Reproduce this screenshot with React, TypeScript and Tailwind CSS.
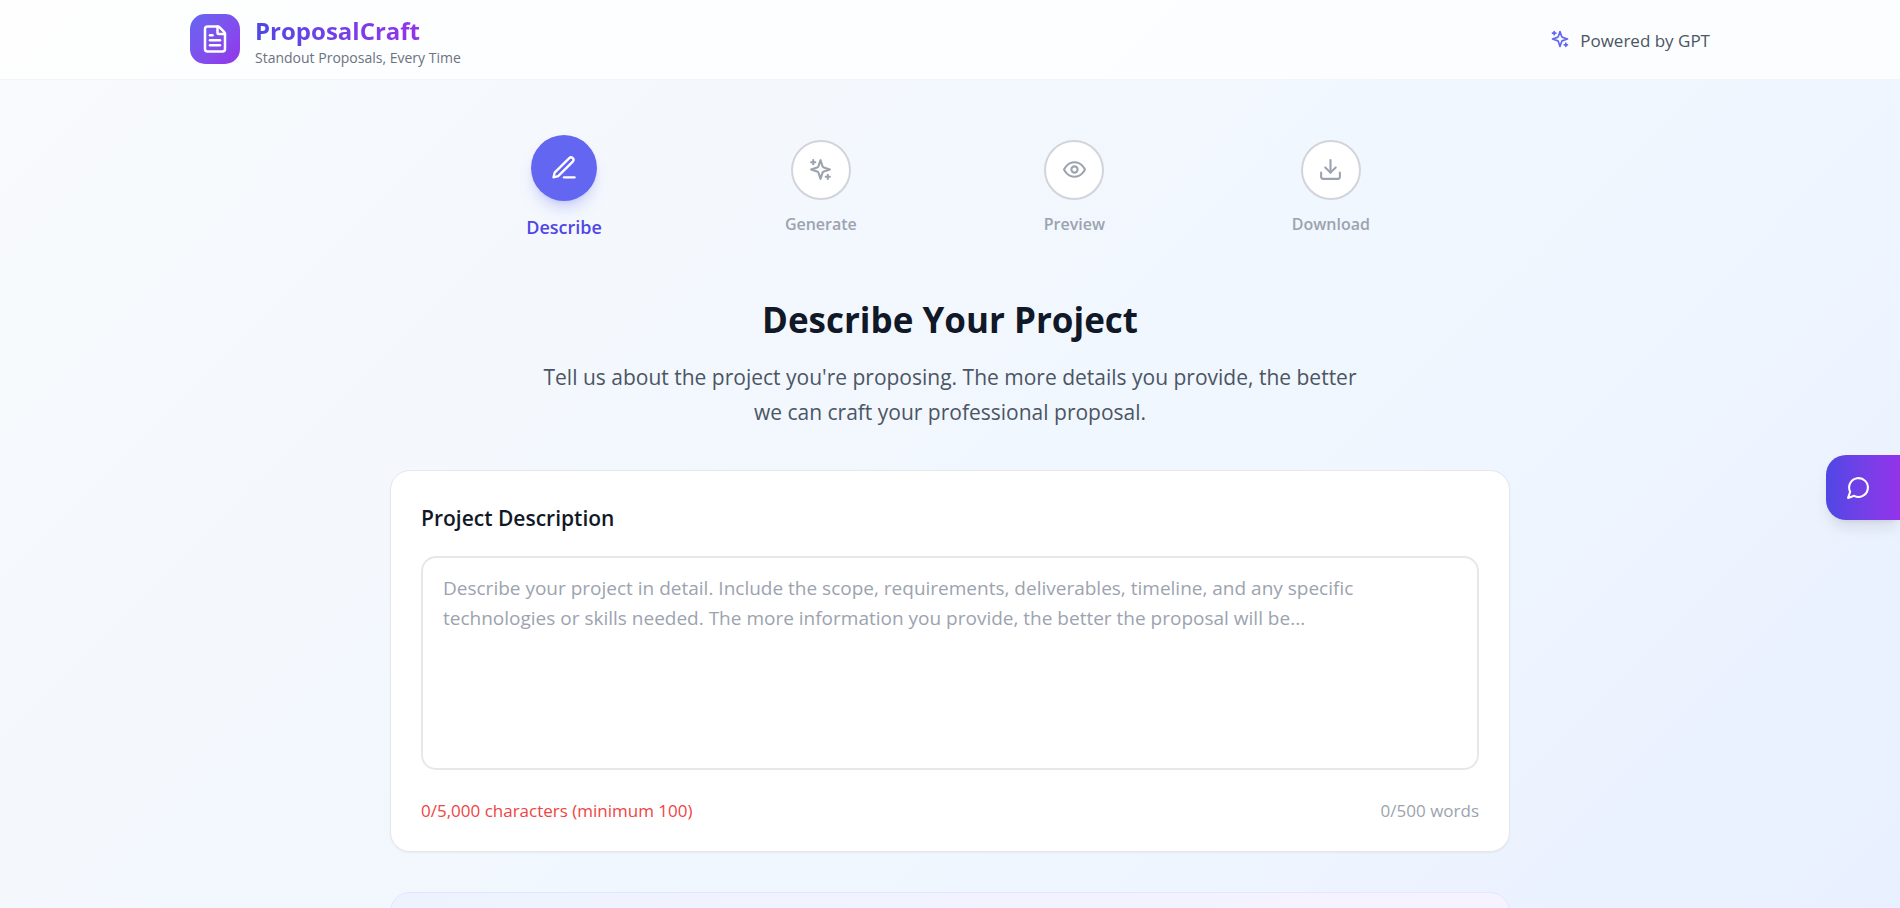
import { Download, FileText } from "lucide-react";
import type { ComponentType, ReactNode } from "react";

type IconProps = { className?: string };

function Icon24({ className, children }: IconProps & { children: ReactNode }) {
  return (
    <svg
      className={className}
      viewBox="0 0 24 24"
      fill="none"
      stroke="currentColor"
      strokeWidth="2"
      strokeLinecap="round"
      strokeLinejoin="round"
      aria-hidden="true"
    >
      {children}
    </svg>
  );
}

function Sparkles({ className }: IconProps) {
  return (
    <Icon24 className={className}>
      <path d="m12 3-1.912 5.813a2 2 0 0 1-1.275 1.275L3 12l5.813 1.912a2 2 0 0 1 1.275 1.275L12 21l1.912-5.813a2 2 0 0 1 1.275-1.275L21 12l-5.813-1.912a2 2 0 0 1-1.275-1.275L12 3Z" />
      <path d="M5 3v4M19 17v4M3 5h4M17 19h4" />
    </Icon24>
  );
}

function Pen({ className }: IconProps) {
  return (
    <Icon24 className={className}>
      <path d="M12 20h9" />
      <path d="M16.5 3.5a2.12 2.12 0 0 1 3 3L7 19l-4 1 1-4Z" />
    </Icon24>
  );
}

function Eye({ className }: IconProps) {
  return (
    <Icon24 className={className}>
      <path d="M2 12s3-7 10-7 10 7 10 7-3 7-10 7-10-7-10-7Z" />
      <circle cx="12" cy="12" r="3" />
    </Icon24>
  );
}

function ChatBubble({ className }: IconProps) {
  return (
    <Icon24 className={className}>
      <path d="M7.9 20A9 9 0 1 0 4 16.1L2 22Z" />
    </Icon24>
  );
}

const steps: { label: string; Icon: ComponentType<IconProps>; active?: boolean }[] = [
  { label: "Describe", Icon: Pen, active: true },
  { label: "Generate", Icon: Sparkles },
  { label: "Preview", Icon: Eye },
  { label: "Download", Icon: Download },
];

function Header() {
  return (
    <header className="border-b border-gray-100 bg-white/80">
      <div className="mx-auto flex h-[79px] max-w-[1600px] items-center justify-between px-10 pb-px">
        <div className="flex items-center gap-[15px]">
          <div className="flex size-[50px] items-center justify-center rounded-[15px] bg-linear-to-br from-[#6366f1] to-[#9333ea]">
            <FileText className="size-[30px] text-white" />
          </div>
          <div className="flex flex-col gap-0.5 pt-[5px]">
            <div className="w-fit bg-linear-to-r from-[#4f46e5] to-[#9333ea] bg-clip-text text-[24px] leading-[30px] font-bold text-transparent">
              ProposalCraft
            </div>
            <p className="text-[14px] leading-[20px] text-[#6b7280]">Standout Proposals, Every Time</p>
          </div>
        </div>
        <div className="flex items-center gap-[10px] pt-[2px] text-[17px] leading-[25px] text-[#4b5563]">
          <Sparkles className="mb-0.5 size-5 text-[#6366f1]" />
          <span>Powered by GPT</span>
        </div>
      </div>
    </header>
  );
}

function Stepper() {
  return (
    <ol className="mx-auto flex max-w-[840px] items-center justify-between">
      {steps.map(({ label, Icon, active }) => (
        <li key={label} className={active ? "flex w-[68px] flex-col items-center" : "flex flex-col items-center"}>
          <span
            className={
              active
                ? "flex size-[66px] items-center justify-center rounded-full bg-[#6366f1] text-white shadow-lg shadow-[#6366f1]/25"
                : "flex size-[60px] items-center justify-center rounded-full border-2 border-[#d1d5db] bg-white text-[#9ca3af]"
            }
          >
            <Icon className={active ? "size-7" : "size-[25px]"} />
          </span>
          <span
            className={
              active
                ? "mt-3 text-[18px] leading-[28px] font-semibold text-[#4f46e5]"
                : "mt-3 text-[16px] leading-[25px] font-semibold text-[#9ca3af]"
            }
          >
            {label}
          </span>
        </li>
      ))}
    </ol>
  );
}

export default function App() {
  return (
    <div className="min-h-[2000px] bg-linear-135 from-[#f8fafc] via-[#eff6ff] to-[#e0e7ff] font-['Open_Sans','Noto_Sans',sans-serif]">
      <Header />
      <main className="mx-auto max-w-[1120px] pt-[55px]">
        <Stepper />

        <div className="mt-14 text-center">
          <h1 className="text-[35px] leading-[45px] font-bold text-[#111827]">Describe Your Project</h1>
          <p className="mx-auto mt-[18px] max-w-[840px] text-[21px] leading-[35px] text-[#4b5563]">
            Tell us about the project you're proposing. The more details you provide, the better we can craft your
            professional proposal.
          </p>
        </div>

        <section className="mt-10 rounded-[20px] border border-[#e5e7eb] bg-white px-[30px] pt-[30px] pb-7 shadow-xs">
          <label htmlFor="description" className="block text-[21px] leading-[35px] font-semibold text-[#111827]">
            Project Description
          </label>
          <textarea
            id="description"
            className="mt-5 block h-[214px] w-full resize-none rounded-[15px] border-2 border-[#e5e7eb] py-[15px] pr-10 pl-5 text-[19px] leading-[30px] text-[#111827] placeholder:text-[#9ca3af]"
            placeholder="Describe your project in detail. Include the scope, requirements, deliverables, timeline, and any specific technologies or skills needed. The more information you provide, the better the proposal will be..."
          />
          <div className="mt-7 flex items-center justify-between text-[17px] leading-[25px]">
            <span className="text-[#ef4444]">0/5,000 characters (minimum 100)</span>
            <span className="text-[#9ca3af]">0/500 words</span>
          </div>
        </section>

        <section className="mt-10 h-[280px] rounded-[20px] border border-[#e0e7ff] bg-linear-to-r from-[#eef2ff] to-[#f5f3ff]" />
      </main>

      <button
        type="button"
        aria-label="Open chat"
        className="fixed top-[455px] right-0 flex h-[65px] w-[74px] items-center rounded-l-[20px] bg-linear-to-r from-[#4f46e5] to-[#9333ea] pl-5 text-white shadow-lg"
      >
        <ChatBubble className="size-[25px]" />
      </button>
    </div>
  );
}
